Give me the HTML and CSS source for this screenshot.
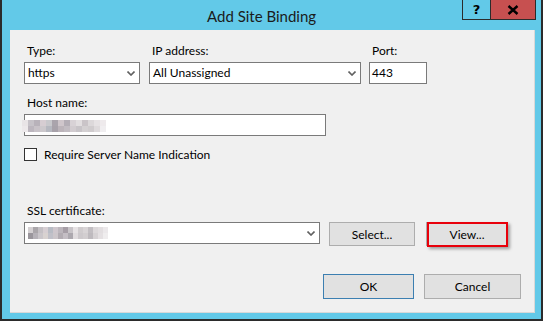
FILE: index.html
```html
<!DOCTYPE html>
<html lang="en">

<head>
    <meta charset="UTF-8">
    <title>Add Site Binding</title>
    <link rel="stylesheet" href="styles.css">
</head>

<body>
    <div class="window">
        <div class="titlebar">
            <div class="caption">Add Site Binding</div>
            <div class="sysbtns">
                <span class="sys help">?</span>
                <span class="sys close">
                    <svg width="12" height="10" viewBox="0 0 12 10"><path d="M1.5 1 L10.5 9 M10.5 1 L1.5 9" stroke="#000" stroke-width="2.4"/></svg>
                </span>
            </div>
        </div>

        <div class="client">
            <div class="row top-row">
                <div class="field f-type">
                    <div class="label">Type:</div>
                    <div class="box combo">https
                        <svg class="chev" width="8" height="5" viewBox="0 0 8 5"><path d="M0.5 0.5 L4 4 L7.5 0.5" fill="none" stroke="#606060" stroke-width="1.6"/></svg>
                    </div>
                </div>
                <div class="field f-ip">
                    <div class="label">IP address:</div>
                    <div class="box combo">All Unassigned
                        <svg class="chev" width="8" height="5" viewBox="0 0 8 5"><path d="M0.5 0.5 L4 4 L7.5 0.5" fill="none" stroke="#606060" stroke-width="1.6"/></svg>
                    </div>
                </div>
                <div class="field f-port">
                    <div class="label">Port:</div>
                    <div class="box port">443</div>
                </div>
            </div>

            <div class="field f-host">
                <div class="label">Host name:</div>
                <div class="box host">
                    <svg class="mosaic" width="84" height="15" viewBox="0 0 84 15">
                        <rect x="0" y="2" width="6" height="6" fill="#e8e4e6"/>
                        <rect x="6" y="2" width="6" height="6" fill="#c6c2c8"/>
                        <rect x="12" y="2" width="6" height="6" fill="#b8b2ba"/>
                        <rect x="18" y="2" width="6" height="6" fill="#d6cdd2"/>
                        <rect x="24" y="2" width="6" height="6" fill="#c8c8cc"/>
                        <rect x="30" y="2" width="6" height="6" fill="#aaa4ac"/>
                        <rect x="36" y="2" width="6" height="6" fill="#cfc6cb"/>
                        <rect x="42" y="2" width="6" height="6" fill="#b4aeb6"/>
                        <rect x="48" y="2" width="6" height="6" fill="#d8d2d6"/>
                        <rect x="54" y="2" width="6" height="6" fill="#e2dee0"/>
                        <rect x="60" y="2" width="6" height="6" fill="#cac4c8"/>
                        <rect x="66" y="2" width="6" height="6" fill="#dcd8da"/>
                        <rect x="72" y="2" width="6" height="6" fill="#e6e2e4"/>
                        <rect x="78" y="2" width="6" height="6" fill="#eeeaec"/>
                        <rect x="0" y="8" width="6" height="6" fill="#ece8ea"/>
                        <rect x="6" y="8" width="6" height="6" fill="#bcb6be"/>
                        <rect x="12" y="8" width="6" height="6" fill="#c8c2c8"/>
                        <rect x="18" y="8" width="6" height="6" fill="#ccc8cc"/>
                        <rect x="24" y="8" width="6" height="6" fill="#b6b8c0"/>
                        <rect x="30" y="8" width="6" height="6" fill="#a8a2aa"/>
                        <rect x="36" y="8" width="6" height="6" fill="#bcb4ba"/>
                        <rect x="42" y="8" width="6" height="6" fill="#c2bcc2"/>
                        <rect x="48" y="8" width="6" height="6" fill="#d2ccd0"/>
                        <rect x="54" y="8" width="6" height="6" fill="#c8c4c8"/>
                        <rect x="60" y="8" width="6" height="6" fill="#d4d0d2"/>
                        <rect x="66" y="8" width="6" height="6" fill="#d0ccce"/>
                        <rect x="72" y="8" width="6" height="6" fill="#dedadc"/>
                        <rect x="78" y="8" width="6" height="6" fill="#f0eef0"/>
                    </svg>
                </div>
            </div>

            <label class="check">
                <span class="checkbox"></span>
                <span>Require Server Name Indication</span>
            </label>

            <div class="field f-ssl">
                <div class="label">SSL certificate:</div>
                <div class="row">
                    <div class="box combo ssl">
                        <svg class="mosaic" width="80" height="14" viewBox="0 0 80 14">
                            <rect x="0" y="1" width="5" height="6" fill="#d4d0d2"/>
                            <rect x="5" y="1" width="5" height="6" fill="#aaa6aa"/>
                            <rect x="10" y="1" width="5" height="6" fill="#c4c0c4"/>
                            <rect x="15" y="1" width="5" height="6" fill="#d6ced2"/>
                            <rect x="20" y="1" width="5" height="6" fill="#b8bcc4"/>
                            <rect x="25" y="1" width="5" height="6" fill="#cec6cc"/>
                            <rect x="30" y="1" width="5" height="6" fill="#bcb6bc"/>
                            <rect x="35" y="1" width="5" height="6" fill="#a69ea6"/>
                            <rect x="40" y="1" width="5" height="6" fill="#c8c4c8"/>
                            <rect x="45" y="1" width="5" height="6" fill="#e6e2e4"/>
                            <rect x="50" y="1" width="5" height="6" fill="#d0ccce"/>
                            <rect x="55" y="1" width="5" height="6" fill="#d8d4d6"/>
                            <rect x="60" y="1" width="5" height="6" fill="#c2bec2"/>
                            <rect x="65" y="1" width="5" height="6" fill="#dcd8da"/>
                            <rect x="70" y="1" width="5" height="6" fill="#e2dee0"/>
                            <rect x="75" y="1" width="5" height="6" fill="#ebe8ea"/>
                            <rect x="0" y="7" width="5" height="6" fill="#9a969c"/>
                            <rect x="5" y="7" width="5" height="6" fill="#b6b2b8"/>
                            <rect x="10" y="7" width="5" height="6" fill="#cac6ca"/>
                            <rect x="15" y="7" width="5" height="6" fill="#d8d2d0"/>
                            <rect x="20" y="7" width="5" height="6" fill="#c0c0c8"/>
                            <rect x="25" y="7" width="5" height="6" fill="#ccc6ca"/>
                            <rect x="30" y="7" width="5" height="6" fill="#b2acb2"/>
                            <rect x="35" y="7" width="5" height="6" fill="#c4bec4"/>
                            <rect x="40" y="7" width="5" height="6" fill="#aca8ae"/>
                            <rect x="45" y="7" width="5" height="6" fill="#e0dcde"/>
                            <rect x="50" y="7" width="5" height="6" fill="#cdc9cc"/>
                            <rect x="55" y="7" width="5" height="6" fill="#d2ced0"/>
                            <rect x="60" y="7" width="5" height="6" fill="#bebabe"/>
                            <rect x="65" y="7" width="5" height="6" fill="#d6d2d4"/>
                            <rect x="70" y="7" width="5" height="6" fill="#e4e0e2"/>
                            <rect x="75" y="7" width="5" height="6" fill="#efedee"/>
                        </svg>
                        <svg class="chev" width="8" height="5" viewBox="0 0 8 5"><path d="M0.5 0.5 L4 4 L7.5 0.5" fill="none" stroke="#606060" stroke-width="1.6"/></svg>
                    </div>
                    <div class="btn select">Select...</div>
                    <div class="btn view">View...
                        <span class="mark"></span>
                    </div>
                </div>
            </div>

            <div class="actions">
                <div class="btn ok">OK</div>
                <div class="btn cancel">Cancel</div>
            </div>
        </div>
    </div>
</body>

</html>
```

FILE: styles.css
```css
body {
    margin: 0;
    background: #ffffff;
    font-family: Lato, "Liberation Sans", sans-serif;
    font-size: 12px;
    color: #000;
}

.window {
    width: 543px;
    height: 321px;
    box-sizing: border-box;
    background: #62c9e8;
    border: 2px solid #2b2b2b;
    border-top: none;
    padding: 0 6px 6px 8px;
    display: flex;
    flex-direction: column;
}

.titlebar {
    height: 30px;
    display: flex;
    align-items: flex-start;
    position: relative;
}
.caption {
    font-size: 15px;
    color: #1b1b1b;
    padding-left: 197px;
    padding-top: 7px;
    flex: 1;
}
.sysbtns {
    display: flex;
    margin-right: -1px;
}
.sys {
    height: 20px;
    box-sizing: border-box;
    border: 1px solid #2b2b2b;
    border-top: none;
    display: flex;
    align-items: center;
    justify-content: center;
}
.help {
    width: 28px;
    border-right: none;
    font-weight: bold;
    font-size: 13px;
    font-family: "DejaVu Sans", sans-serif;
}
.close {
    width: 46px;
    background: #c75050;
}

.client {
    flex: 1;
    background: #f0f0f0;
    box-shadow: inset -1px -1px 0 #d8d8d8;
    padding: 13px 0 0 14px;
}

.row {
    display: flex;
    align-items: flex-start;
}

.label {
    height: 16px;
    line-height: 16px;
    padding-left: 3px;
    margin-bottom: 3px;
}

.box {
    height: 22px;
    box-sizing: border-box;
    border: 1px solid #7a7a7a;
    background: #fff;
    line-height: 20px;
    padding-left: 3px;
    position: relative;
    display: flex;
    align-items: center;
}
.combo .chev {
    position: absolute;
    right: 4px;
    top: 8px;
}

.f-type .box { width: 116px; }
.f-ip { margin-left: 9px; }
.f-ip .box { width: 212px; }
.f-port { margin-left: 8px; }
.f-port .box { width: 58px; padding-left: 2px; }

.f-host { margin-top: 11px; }
.f-host .box { width: 302px; padding-left: 0; overflow: visible; }
.f-host .mosaic { margin-left: -3px; }

.check {
    display: flex;
    align-items: center;
    margin-top: 12px;
    height: 13px;
}
.checkbox {
    width: 13px;
    height: 13px;
    box-sizing: border-box;
    border: 1px solid #333;
    background: #fff;
    margin-right: 7px;
}

.f-ssl { margin-top: 42px; }
.f-ssl .ssl { width: 296px; padding-left: 3px; }

.btn {
    height: 24px;
    box-sizing: border-box;
    border: 1px solid #adadad;
    background: #e1e1e1;
    display: flex;
    align-items: center;
    justify-content: center;
    position: relative;
}
.select { width: 86px; margin-left: 9px; }
.view { width: 82px; margin-left: 11px; }
.view .mark {
    position: absolute;
    left: 0;
    top: -1px;
    right: -1px;
    bottom: -2px;
    border: 2px solid #e8000b;
    box-shadow: 2px 2px 3px rgba(0, 0, 0, 0.35);
}

.actions {
    display: flex;
    justify-content: flex-end;
    margin-top: 28px;
    margin-right: 14px;
}
.ok { width: 91px; height: 25px; border-color: #3c7fb1; }
.cancel { width: 97px; height: 25px; margin-left: 10px; }
```
